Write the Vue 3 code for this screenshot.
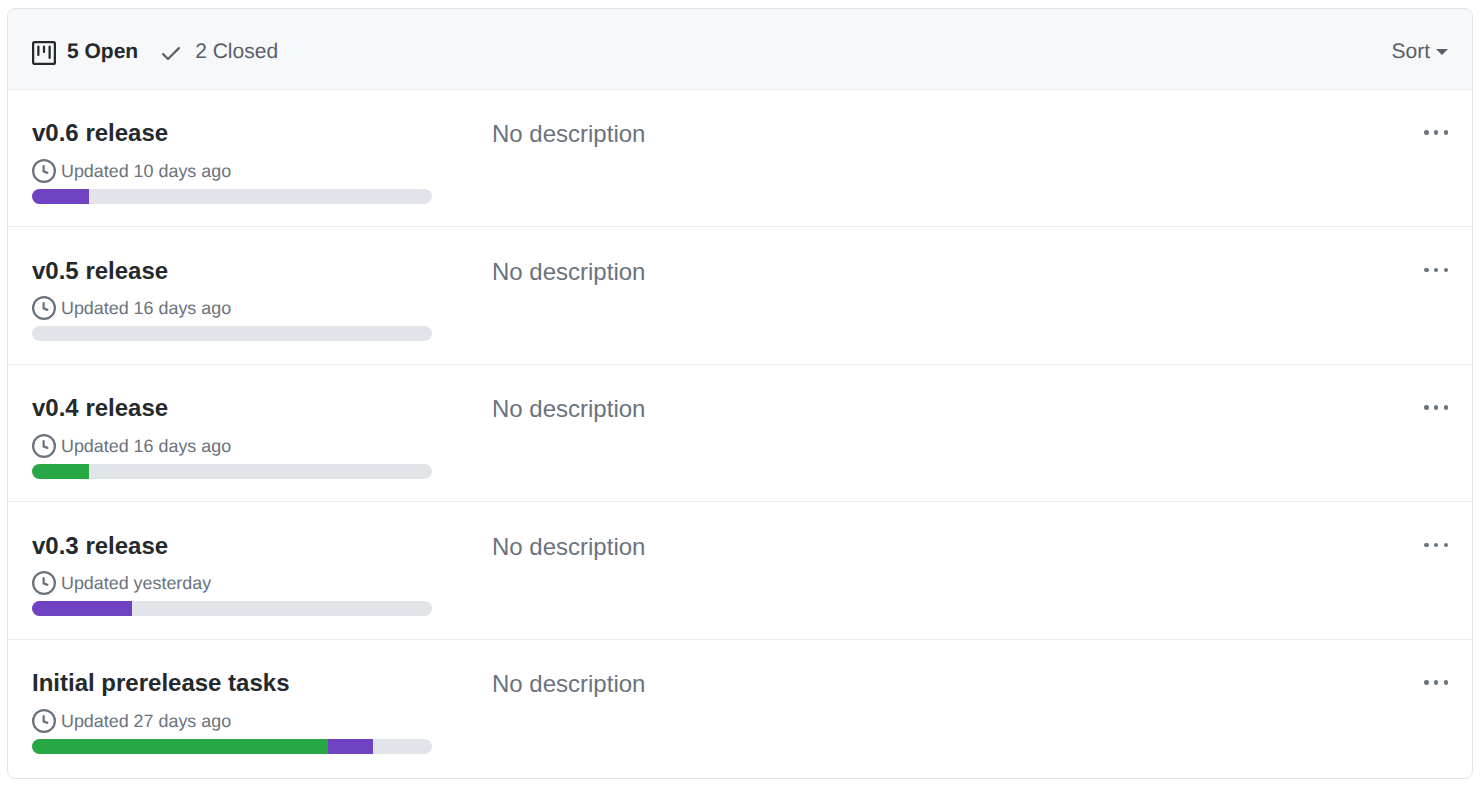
<script setup>
const rows = [
  { title: 'v0.6 release', updated: 'Updated 10 days ago', green: 0, purple: 57 },
  { title: 'v0.5 release', updated: 'Updated 16 days ago', green: 0, purple: 0 },
  { title: 'v0.4 release', updated: 'Updated 16 days ago', green: 57, purple: 0 },
  { title: 'v0.3 release', updated: 'Updated yesterday', green: 0, purple: 100 },
  { title: 'Initial prerelease tasks', updated: 'Updated 27 days ago', green: 296, purple: 45 },
]
</script>

<template>
  <div class="page">
    <section class="card">
      <header class="head">
        <div class="states">
          <span class="state open">
            <svg class="project" viewBox="0 0 16 16" width="24" height="24" fill="currentColor">
              <path fill-rule="evenodd" d="M1.75 0A1.75 1.75 0 000 1.75v12.5C0 15.216.784 16 1.75 16h12.5A1.75 1.75 0 0016 14.25V1.75A1.75 1.75 0 0014.25 0H1.75zM1.5 1.75a.25.25 0 01.25-.25h12.5a.25.25 0 01.25.25v12.5a.25.25 0 01-.25.25H1.75a.25.25 0 01-.25-.25V1.75zM11.75 3a.75.75 0 00-.75.75v7.5a.75.75 0 001.5 0v-7.5a.75.75 0 00-.75-.75zm-8.25.75a.75.75 0 011.5 0v5.5a.75.75 0 01-1.5 0v-5.5zM8 3a.75.75 0 00-.75.75v3.5a.75.75 0 001.5 0v-3.5A.75.75 0 008 3z"/>
            </svg>
            5 Open
          </span>
          <span class="state closed">
            <svg class="check" viewBox="0 0 16 16" width="24" height="24" fill="currentColor">
              <path fill-rule="evenodd" d="M13.78 4.22a.75.75 0 010 1.06l-7.25 7.25a.75.75 0 01-1.06 0L2.22 9.28a.75.75 0 011.06-1.06L6 10.94l6.72-6.72a.75.75 0 011.06 0z"/>
            </svg>
            2 Closed
          </span>
        </div>
        <span class="sort">Sort<i class="caret"></i></span>
      </header>
      <article v-for="row in rows" :key="row.title" class="row">
        <div class="main">
          <h4 class="title">{{ row.title }}</h4>
          <div class="meta">
            <svg class="clock" viewBox="0 0 16 16" width="24" height="24" fill="currentColor">
              <path fill-rule="evenodd" d="M1.5 8a6.5 6.5 0 1113 0 6.5 6.5 0 01-13 0zM8 0a8 8 0 100 16A8 8 0 008 0zm.5 4.75a.75.75 0 00-1.5 0v3.5a.75.75 0 00.471.696l2.5 1a.75.75 0 00.557-1.392L8.5 7.742V4.75z"/>
            </svg>
            <span class="when">{{ row.updated }}</span>
          </div>
          <div class="bar">
            <span class="green" :style="{ width: row.green + 'px' }"></span>
            <span class="purple" :style="{ width: row.purple + 'px' }"></span>
          </div>
        </div>
        <p class="desc">No description</p>
        <div class="dots"><i></i><i></i><i></i></div>
      </article>
    </section>
  </div>
</template>

<style scoped>
.page {
  padding: 8px 8px 0 7px;
  font-family: "Liberation Sans", Arial, sans-serif;
  color: #24292e;
}
.card {
  border: 1.33px solid #e1e4e8;
  border-radius: 8px;
  overflow: hidden;
  background: #fff;
}
.head {
  height: 79.9px;
  box-sizing: border-box;
  padding: 6px 24px 0;
  background: #f6f8fa;
  display: flex;
  align-items: center;
  justify-content: space-between;
  font-size: 21px;
  text-rendering: geometricPrecision;
}
.states {
  display: flex;
  align-items: center;
  gap: 21px;
}
.state {
  display: flex;
  align-items: center;
  gap: 11px;
}
.state svg {
  transform: translateY(1px);
}
.closed {
  gap: 12px;
}
.open {
  font-weight: 700;
  color: #24292e;
}
.closed {
  color: #586069;
}
.sort {
  color: #586069;
  display: flex;
  align-items: center;
}
.caret {
  display: block;
  margin-left: 6px;
  margin-top: 1px;
  border: 6px solid transparent;
  border-top-color: #586069;
  border-bottom-width: 0;
  width: 0;
  height: 0;
}
.row {
  display: flex;
  align-items: flex-start;
  height: 137.5px;
  box-sizing: border-box;
  border-top: 1.33px solid #eaecef;
  padding: 27.1px 24px 0;
}
.row:last-child {
  height: 139px;
}
.main {
  width: 400px;
  flex: none;
  margin-right: 60px;
}
.title {
  margin: 0.4px 0 0;
  font-size: 24px;
  line-height: 32px;
  font-weight: 700;
}
.meta {
  display: flex;
  align-items: center;
  height: 24px;
  margin-top: 9.6px;
  font-size: 17.9px;
  color: #6a737d;
  gap: 5px;
  text-rendering: geometricPrecision;
}
.when {
  padding-top: 1px;
}
.bar {
  display: flex;
  height: 15px;
  margin-top: 6px;
  border-radius: 8px;
  overflow: hidden;
  background: #e1e4e8;
}
.green { background: #28a745; }
.purple { background: #6f42c1; }
.desc {
  flex: 1;
  margin: -0.6px 0 0;
  font-size: 24px;
  line-height: 36px;
  color: #6a737d;
}
.dots {
  display: flex;
  gap: 5.25px;
  margin-top: 13.25px;
}
.dots i {
  display: block;
  width: 4.5px;
  height: 4.5px;
  border-radius: 50%;
  background: #6a737d;
}
</style>
